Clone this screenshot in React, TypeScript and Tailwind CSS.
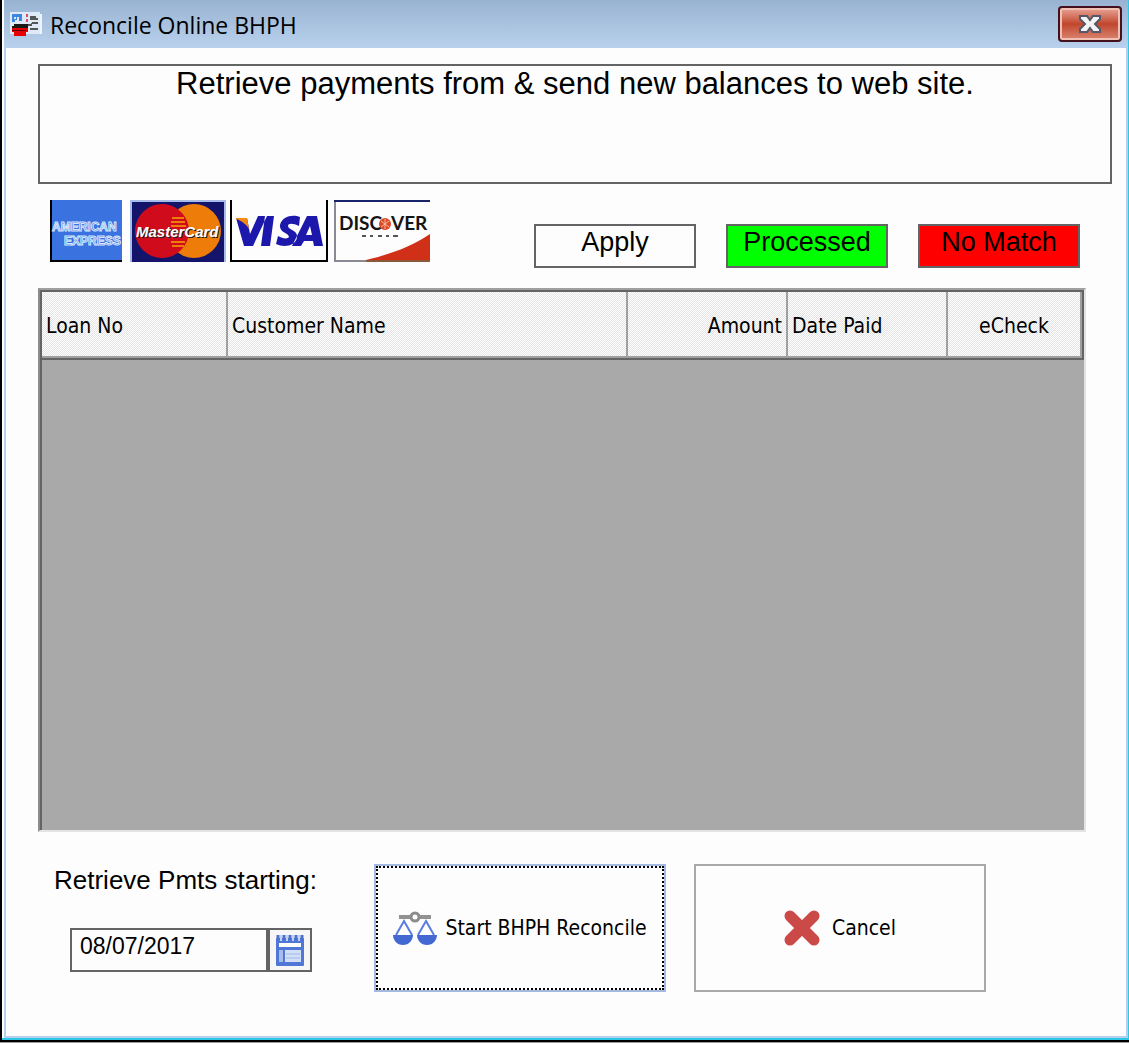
import React, { useState } from "react";

const columns = [
  { name: "Loan No", width: "w-[186px]", align: "text-left" },
  { name: "Customer Name", width: "w-[400px]", align: "text-left" },
  { name: "Amount", width: "w-[160px]", align: "text-right" },
  { name: "Date Paid", width: "w-[160px]", align: "text-left" },
  { name: "eCheck", width: "w-auto", align: "text-center" },
];

const legend = [
  { name: "Apply", color: "bg-[#fdfdfd]" },
  { name: "Processed", color: "bg-[#00ff00]" },
  { name: "No Match", color: "bg-[#ff0000]" },
];

const AppIcon = () => (
  <svg width="32" height="24" viewBox="0 0 32 24" shapeRendering="crispEdges">
    <rect width="30" height="22" fill="#dfeaf8" />
    <rect x="30" y="2" width="2" height="20" fill="#eef4fc" />
    <path d="M2 2h10v7h-3V5H7v3H5v2H2z" fill="#3f86e0" />
    <path d="M4 5h2v2H4z" fill="#dfeaf8" />
    <path d="M16 2h2v3h-2zM16 7h2v3h-2z" fill="#e04a6a" />
    <path d="M4 12h14v4H2v-2h2z" fill="#1a1a1a" />
    <path d="M2 16h16v4h-2v4H4v-4H2z" fill="#e60000" />
    <path d="M2 18h14v1H2z" fill="#5a0000" />
    <path d="M20 4h6v2h2v2h-8zM22 10h6v2h-8zM18 12h4v2h-4zM20 16h8v2h-8z" fill="#555" />
  </svg>
);

const AmexLogo = () => (
  <svg width="76" height="62" viewBox="0 0 76 62" role="img" aria-label="American Express">
    <rect width="72" height="62" fill="#000" />
    <rect x="2" width="70" height="60" fill="#3a72e0" />
    <g
      fill="#3a72e0"
      stroke="#d8e8fc"
      strokeWidth="1"
      className="font-['Liberation_Sans'] text-[12px] font-bold"
    >
      <text x="2" y="31">AMERICAN</text>
      <text x="14" y="45">EXPRESS</text>
    </g>
    <rect x="72" width="4" height="62" fill="#fdfdfd" />
  </svg>
);

const MasterCardLogo = () => (
  <svg width="96" height="62" viewBox="0 0 96 62" role="img" aria-label="MasterCard">
    <rect width="96" height="62" fill="#a9bdea" />
    <rect x="2" y="2" width="92" height="60" fill="#14146a" />
    <circle cx="64" cy="31" r="27" fill="#ee7c08" />
    <circle cx="32" cy="31" r="27" fill="#d00c1c" />
    <path
      d="M42 18h12M41 22h14M41 26h15M41 42h14M42 46h12"
      stroke="#ee7c08"
      strokeWidth="2"
    />
    <g className="font-['Liberation_Sans'] text-[15px] font-bold italic">
      <text x="7" y="38" fill="#222" aria-hidden="true">MasterCard</text>
      <text x="6" y="37" fill="#fff">MasterCard</text>
    </g>
  </svg>
);

const VisaLogo = () => (
  <svg width="98" height="62" viewBox="0 0 98 62" role="img" aria-label="Visa">
    <rect width="98" height="62" fill="#000" />
    <rect x="2" width="94" height="60" fill="#fdfdfd" />
    <path
      d="M6 18h11l3 16 8-18h9L23 46h-9z M35 16h9l-4 30h-9z M69 26c-6-3-11-3-11 0 0 4 10 4 9 11-1 9-13 11-21 7l2-8c5 3 10 3 11 1 0-4-10-4-9-12 2-9 13-11 20-8z M77 16h10l6 30h-9l-1-5h-9l-3 5h-9zM80 26l-4 9h6z"
      fill="#1c18ac"
      fillRule="evenodd"
    />
    <path d="M6 18h11l2 11c-3-5-7-8-13-10z" fill="#f48a14" />
  </svg>
);

const DiscoverLogo = () => (
  <svg width="98" height="62" viewBox="0 0 98 62" role="img" aria-label="Discover Network">
    <rect x="2" width="96" height="62" fill="#8a8a94" />
    <rect x="4" y="2" width="94" height="58" fill="#fdfdfd" />
    <rect x="2" width="96" height="2" fill="#18246a" />
    <path d="M34 60C60 54 80 46 98 34v26z" fill="#d03018" />
    <path d="M34 60h64v2H34z" fill="#8a5a38" />
    <g fill="#151515" className="font-['Lato'] text-[19px] font-bold">
      <text x="7" y="30">DISC</text>
      <text x="59" y="30">VER</text>
    </g>
    <circle cx="53" cy="24" r="6" fill="#dc4a28" />
    <path d="M49 21l8 6M49 27l8-6M53 19v10" stroke="#f8b8a0" strokeWidth="1" />
    <path d="M30 36h4M38 36h3M46 36h4M54 36h3M61 36h5" stroke="#555" strokeWidth="2" />
  </svg>
);

const CalendarIcon = () => (
  <svg width="28" height="32" viewBox="0 0 28 32">
    <rect y="4" width="28" height="28" rx="1" fill="#5076d6" />
    <path
      d="M2 1v5M8 1v5M14 1v5M20 1v5M26 1v5"
      stroke="#4a70d0"
      strokeWidth="3"
    />
    <path d="M5 1v6M11 1v6M17 1v6M23 1v6" stroke="#c4d2f4" strokeWidth="2" />
    <path d="M3 9h22v4H3z" fill="#fdfdfd" />
    <path d="M3 16h4v12H3z" fill="#a8bcec" />
    <path d="M9 16h16v12H9z" fill="#d3dff6" />
    <path d="M10 20h14M10 24h14" stroke="#9cb8ec" strokeWidth="1" />
  </svg>
);

const ScalesIcon = () => (
  <svg width="44" height="34" viewBox="0 0 44 34" fill="none">
    <path d="M6 6h32" stroke="#929292" strokeWidth="4" />
    <circle cx="22" cy="6" r="4" fill="#fdfdfd" stroke="#8c8c8c" strokeWidth="3" />
    <path
      d="M3 24l8-14 8 14M25 24l8-14 8 14"
      stroke="#5a7ce0"
      strokeWidth="2"
    />
    <path
      d="M0 24h20c0 5-4 10-10 10S0 29 0 24zM24 24h20c0 5-4 10-10 10s-10-5-10-10z"
      fill="#4468d2"
    />
  </svg>
);

const CancelIcon = () => (
  <svg width="36" height="38" viewBox="0 0 36 38">
    <path
      d="M6 7l24 24M30 7L6 31"
      stroke="#cb4a48"
      strokeWidth="11"
      strokeLinecap="round"
    />
  </svg>
);

const CloseIcon = () => (
  <svg width="22" height="18" viewBox="0 0 22 18">
    <path
      d="M1 1h7l3 4 3-4h7v3l-5 5 5 5v3h-7l-3-4-3 4H1v-3l5-5-5-5z"
      fill="#f4f4f4"
      stroke="#55586a"
      strokeWidth="2"
    />
  </svg>
);

const App = () => {
  const [date, setDate] = useState("08/07/2017");

  return (
    <div className="flex min-h-screen flex-col border-b border-[#999] bg-black text-black">
      <div className="mb-0.5 ml-0.5 flex flex-1 flex-col border-b-2 border-r border-[#2cc8e8] bg-[#fdfdfd] pl-0.5">
        <header className="flex h-12 shrink-0 items-center justify-between bg-linear-to-b from-[#98b3d1] to-[#b9d1ed] px-1.5">
          <div className="flex items-center gap-2">
            <AppIcon />
            <h1 className="pt-0.5 font-['Open_Sans',sans-serif] text-[23px] leading-8">
              Reconcile Online BHPH
            </h1>
          </div>
          <button
            type="button"
            aria-label="Close"
            className="flex h-9 w-16 items-center justify-center rounded-sm border-2 border-[#43101c] bg-linear-to-b from-[#e8a598] from-0% via-[#c0462c] via-50% to-[#d98672] to-100% ring-2 ring-inset ring-[#f0c0b4]"
          >
            <CloseIcon />
          </button>
        </header>

        <main className="flex flex-1 flex-col border-x-2 border-b-2 border-[#b8d0ec] pb-11 pl-8 pr-3.5 pt-4">
          <p className="h-[120px] border-2 border-[#646464] text-center font-['Liberation_Sans',sans-serif] text-[31px] leading-9">
            Retrieve payments from &amp; send new balances to web site.
          </p>

          <div className="mt-4 flex items-start justify-between pl-3 pr-8">
            <div className="flex gap-1">
              <AmexLogo />
              <MasterCardLogo />
              <VisaLogo />
              <DiscoverLogo />
            </div>
            <ul className="mt-6 flex gap-[30px] font-['Liberation_Sans',sans-serif] text-[27px] leading-8">
              {legend.map((item) => (
                <li
                  key={item.name}
                  className={`h-11 w-[162px] border-2 border-[#646464] text-center ${item.color}`}
                >
                  {item.name}
                </li>
              ))}
            </ul>
          </div>

          <div className="mr-[26px] mt-5 flex flex-1 border-2 border-b-[#e3e3e3] border-l-[#8c8c8c] border-r-[#e3e3e3] border-t-[#a0a0a0] bg-[#a9a9a9]">
            <div className="flex-1 border-l-2 border-[#646464]">
              <table className="w-full table-fixed border-separate border-spacing-0 border-b-2 border-r-2 border-t-2 border-[#646464]">
                <thead>
                  <tr>
                    {columns.map((column) => (
                      <th
                        key={column.name}
                        className={`h-[66px] border-b-2 border-r-2 border-[#a0a0a0] bg-[repeating-conic-gradient(#e4e4e4_0_25%,#ffffff_0_50%)] bg-[length:2px_2px] px-1 pt-1 font-['DejaVu_Sans_Condensed','DejaVu_Sans',sans-serif] text-[21px] font-normal leading-7 ${column.width} ${column.align}`}
                      >
                        {column.name}
                      </th>
                    ))}
                  </tr>
                </thead>
              </table>
            </div>
          </div>

          <div className="mt-8 flex items-start">
            <div className="w-[336px] pl-4 font-['Liberation_Sans',sans-serif]">
              <label htmlFor="start-date" className="block text-[26px] leading-8">
                Retrieve Pmts starting:
              </label>
              <div className="ml-4 mt-8 flex h-11 w-[242px] border-2 border-[#646464]">
                <input
                  id="start-date"
                  type="text"
                  value={date}
                  onChange={(e) => setDate(e.target.value)}
                  className="w-0 flex-1 pb-2 pl-2 text-[23px] leading-8 outline-none"
                />
                <button
                  type="button"
                  aria-label="Pick a date"
                  className="flex w-[44px] items-center justify-center border-l-4 border-[#646464] bg-[#f6f6f6]"
                >
                  <CalendarIcon />
                </button>
              </div>
            </div>
            <div className="flex gap-7 font-['DejaVu_Sans_Condensed','DejaVu_Sans',sans-serif] text-[21px]">
              <button
                type="button"
                className="flex h-32 w-[292px] items-center justify-center gap-2 border-2 border-[#a3b9e0] outline-2 -outline-offset-4 outline-dotted outline-black"
              >
                <ScalesIcon />
                <span className="pt-0.5">Start BHPH Reconcile</span>
              </button>
              <button
                type="button"
                className="flex h-32 w-[292px] items-center justify-center gap-3 border-2 border-[#a9a9a9]"
              >
                <CancelIcon />
                <span className="pt-0.5">Cancel</span>
              </button>
            </div>
          </div>
        </main>
      </div>
    </div>
  );
};

export default App;
